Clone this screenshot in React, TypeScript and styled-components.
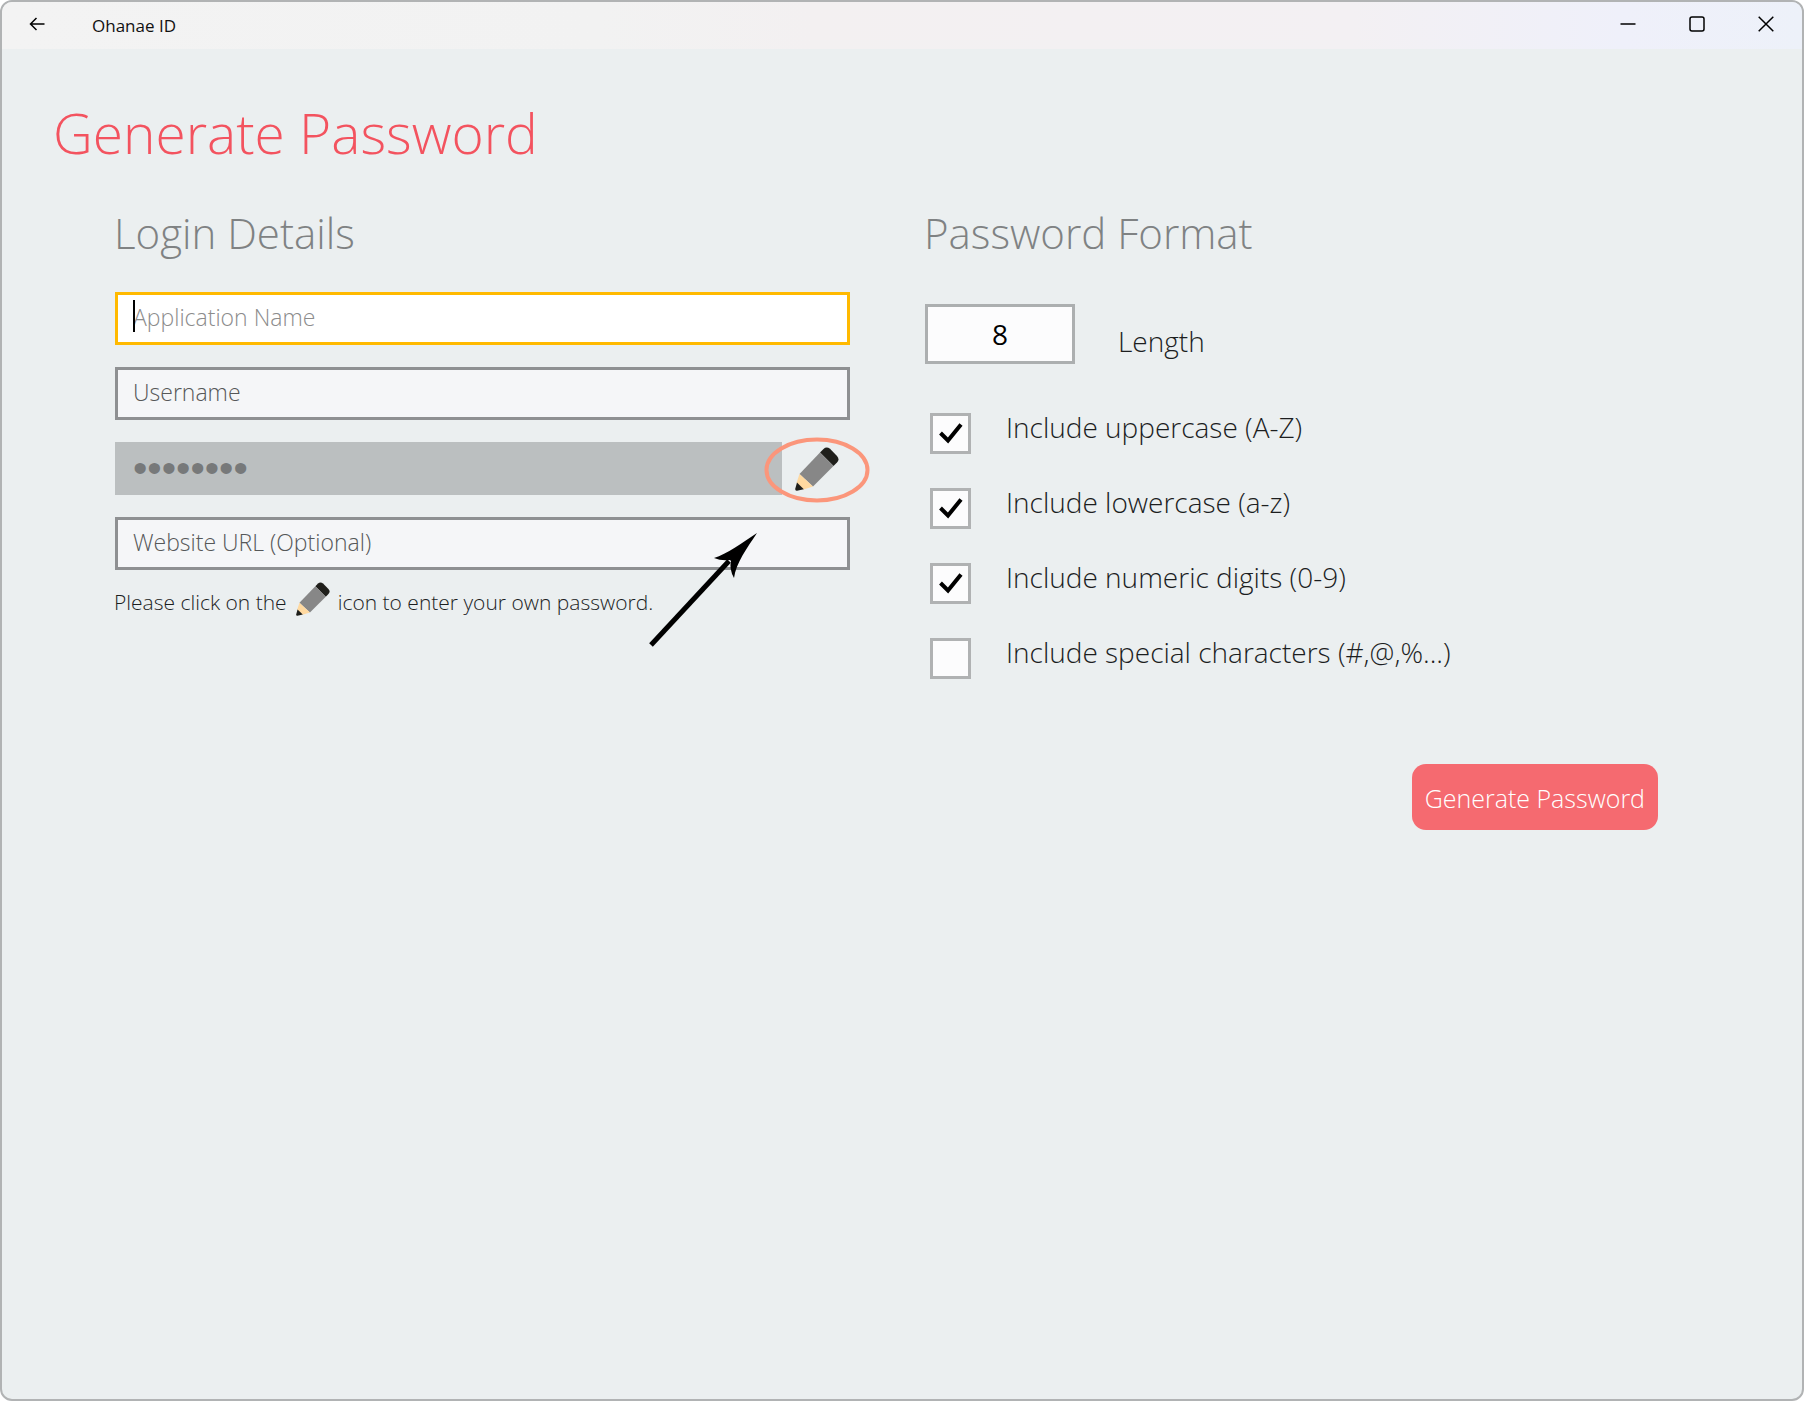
import React, { useState } from "react";
import styled, { createGlobalStyle } from "styled-components";

const GlobalStyle = createGlobalStyle`
  *, *::before, *::after { box-sizing: border-box; }
  html, body { margin: 0; background: #ffffff; }
  body, input, button {
    font-family: "Open Sans", "Noto Sans", sans-serif;
    font-weight: 300;
  }
`;

const Window = styled.div`
  display: flex;
  flex-direction: column;
  min-height: 100vh;
  border: 2px solid #b1b3b4;
  border-radius: 12px;
  overflow: hidden;
  background: #ebeff0;
`;

const TitleBar = styled.header`
  display: flex;
  align-items: center;
  height: 47px;
  padding-right: 2px;
  background: linear-gradient(90deg, #f3f3f3 0%, #f2f2f2 33%, #f3f0f1 45%, #f3f0f3 75%, #eff0fa 90%, #edf1f9 100%);
`;

const BarButton = styled.button`
  display: grid;
  place-items: center;
  width: 69px;
  height: 47px;
  padding: 0 0 3px;
  border: 0;
  background: transparent;
  color: #000000;
`;

const AppName = styled.span`
  flex: 1;
  padding-left: 21px;
  font-size: 17px;
  font-weight: 400;
  line-height: 24px;
  color: #111111;
`;

const Page = styled.main`
  padding: 44px 142px 60px 113px;
`;

const PageTitle = styled.h1`
  margin: 0 0 30px -62px;
  font-size: 55px;
  font-weight: 300;
  line-height: 80px;
  color: #f3535f;
`;

const Columns = styled.div`
  display: grid;
  grid-template-columns: 1fr 1fr;
  gap: 75px;
`;

const SectionTitle = styled.h2`
  margin: 0 0 29px -1px;
  font-size: 42px;
  font-weight: 300;
  line-height: 60px;
  color: #7f8283;
`;

const Fields = styled.div`
  display: flex;
  flex-direction: column;
  gap: 22px;
`;

const FieldRow = styled.div`
  position: relative;
  display: flex;
  align-items: center;
`;

const TextField = styled.input<{ $active?: boolean }>`
  flex: 1;
  min-width: 0;
  height: 53px;
  padding: 0 15px 3px;
  border: 3px solid ${(p) => (p.$active ? "#ffb900" : "#8e9092")};
  border-radius: 0;
  outline: none;
  background: ${(p) => (p.$active ? "#ffffff" : "#f5f6f8")};
  font-size: 23px;
  color: #000000;
  caret-color: ${(p) => (p.$active ? "transparent" : "auto")};
  &::placeholder {
    opacity: 1;
    color: ${(p) => (p.$active ? "#8c8c8c" : "#565859")};
  }
`;

const Caret = styled.span`
  position: absolute;
  left: 18px;
  top: 8px;
  width: 2px;
  height: 32px;
  background: #000000;
`;

const PasswordField = styled.input`
  flex: 1;
  min-width: 0;
  height: 53px;
  padding: 0 18px;
  border: 0;
  border-radius: 0;
  background: #bbbfc0;
  font-family: "Liberation Sans", Arial, sans-serif;
  font-size: 41px;
  color: #77797a;
`;

const EditButton = styled.button`
  display: grid;
  place-items: center;
  width: 68px;
  height: 53px;
  padding: 0 0 0 2px;
  border: 0;
  background: transparent;
`;

const Highlight = styled.svg`
  position: absolute;
  right: -20px;
  top: -5px;
  pointer-events: none;
`;

const Pointer = styled.svg`
  position: absolute;
  right: 93px;
  top: 16px;
  pointer-events: none;
`;

const Hint = styled.p`
  display: flex;
  align-items: center;
  margin: 12px 0 0 -1px;
  font-size: 21px;
  line-height: 36px;
  color: #1c1e1f;
`;

const HintIcon = styled.span`
  display: flex;
  padding: 0 8px 6px 9px;
`;

const LengthRow = styled.div`
  display: flex;
  align-items: center;
  gap: 43px;
  margin: 41px 0 43px;
`;

const LengthField = styled.input`
  width: 150px;
  height: 60px;
  padding: 0;
  border: 3px solid #acafb0;
  border-radius: 0;
  background: #fcfcfd;
  font-size: 28px;
  font-weight: 400;
  text-align: center;
  color: #000000;
`;

const OptionLabel = styled.label`
  font-size: 28px;
  line-height: 40px;
  color: #1c1e1f;
`;

const LengthLabel = styled(OptionLabel)`
  padding-top: 14px;
`;

const Options = styled.div`
  display: flex;
  flex-direction: column;
  gap: 28px;
`;

const OptionRow = styled.div`
  display: flex;
  align-items: flex-start;
  gap: 35px;
  padding-left: 5px;
`;

const CheckBox = styled.span`
  position: relative;
  width: 41px;
  height: 41px;
  margin-top: 6px;
`;

const CheckInput = styled.input`
  appearance: none;
  display: block;
  width: 41px;
  height: 41px;
  margin: 0;
  border: 3px solid #b0b2b3;
  background: #fcfcfd;
`;

const CheckMark = styled.svg`
  position: absolute;
  left: 9px;
  top: 10px;
  pointer-events: none;
`;

const Actions = styled.div`
  display: flex;
  justify-content: flex-end;
  margin-top: 85px;
  padding-right: 2px;
`;

const PrimaryButton = styled.button`
  height: 66px;
  padding: 2px 13px 0;
  border: 0;
  border-radius: 14px;
  background: #f56a70;
  font-size: 25px;
  white-space: nowrap;
  color: #ffffff;
`;

const Pencil = ({ size }: { size: number }) => (
  <svg width={size} height={size} viewBox="0 0 44 44" aria-hidden="true">
    <path d="M25 5.5 L28.5 2 Q31.5 -0.8 35 1.8 L42 9 Q45 12.500 42 15.500 L38.500 19 Z" fill="#1f1f1b" />
    <path d="M25 5.500 L38.500 19 L18 39.500 L4.500 27 Z" fill="#878787" />
    <path d="M4.500 27 L18 39.500 L8.500 42.500 L1.500 36 Z" fill="#ffd9a0" />
    <path d="M2 35.500 L8.800 42.200 L2 43.800 Q0 44 0.200 42 Z" fill="#1f1f1b" />
  </svg>
);

const initialOptions = [
  { id: "upper", label: "Include uppercase (A-Z)", checked: true },
  { id: "lower", label: "Include lowercase (a-z)", checked: true },
  { id: "digits", label: "Include numeric digits (0-9)", checked: true },
  { id: "special", label: "Include special characters (#,@,%...)", checked: false },
];

export default function App() {
  const [options, setOptions] = useState(initialOptions);
  const toggle = (id: string) =>
    setOptions(options.map((o) => (o.id === id ? { ...o, checked: !o.checked } : o)));

  return (
    <>
      <GlobalStyle />
      <Window>
        <TitleBar>
          <BarButton aria-label="Back">
            <svg width="16" height="14" viewBox="0 0 16 14" fill="none" stroke="currentColor" strokeWidth="1.5">
              <path d="M15.500 7 H1.500 M7.500 1 L1.500 7 L7.500 13" />
            </svg>
          </BarButton>
          <AppName>Ohanae ID</AppName>
          <BarButton aria-label="Minimize">
            <svg width="16" height="16" viewBox="0 0 16 16" stroke="currentColor" strokeWidth="1.5">
              <path d="M0.500 8 H15.500" />
            </svg>
          </BarButton>
          <BarButton aria-label="Maximize">
            <svg width="16" height="16" viewBox="0 0 16 16" fill="none" stroke="currentColor" strokeWidth="1.5">
              <rect x="1" y="1" width="14" height="14" rx="2" />
            </svg>
          </BarButton>
          <BarButton aria-label="Close">
            <svg width="16" height="16" viewBox="0 0 16 16" stroke="currentColor" strokeWidth="1.5">
              <path d="M0.700 0.700 L15.300 15.300 M15.300 0.700 L0.700 15.300" />
            </svg>
          </BarButton>
        </TitleBar>

        <Page>
          <PageTitle>Generate Password</PageTitle>
          <Columns>
            <section>
              <SectionTitle>Login Details</SectionTitle>
              <Fields>
                <FieldRow>
                  <TextField $active aria-label="Application Name" placeholder="Application Name" />
                  <Caret />
                </FieldRow>
                <FieldRow>
                  <TextField aria-label="Username" placeholder="Username" />
                </FieldRow>
                <FieldRow>
                  <PasswordField type="password" aria-label="Password" defaultValue="password" disabled />
                  <EditButton aria-label="Edit password">
                    <Pencil size={44} />
                  </EditButton>
                  <Highlight width="106" height="66" viewBox="0 0 106 66" fill="none" aria-hidden="true">
                    <ellipse cx="53" cy="33" rx="50.500" ry="30.500" stroke="#fb967b" strokeWidth="4" />
                  </Highlight>
                </FieldRow>
                <FieldRow>
                  <TextField aria-label="Website URL" placeholder="Website URL (Optional)" />
                  <Pointer width="108" height="114" viewBox="0 0 108 114" aria-hidden="true">
                    <path d="M2 112 L80 28" stroke="#000000" strokeWidth="5" />
                    <path d="M108 0 C93 10 78 21 65 25 Q72 28 81 27 L82 28 Q80 36 85 45 C87 30 98 15 108 0 Z" fill="#000000" />
                  </Pointer>
                </FieldRow>
              </Fields>
              <Hint>
                <span>Please click on the</span>
                <HintIcon>
                  <Pencil size={34} />
                </HintIcon>
                <span>icon to enter your own password.</span>
              </Hint>
            </section>

            <section>
              <SectionTitle>Password Format</SectionTitle>
              <LengthRow>
                <LengthField id="length" defaultValue="8" inputMode="numeric" />
                <LengthLabel htmlFor="length">Length</LengthLabel>
              </LengthRow>
              <Options>
                {options.map((o) => (
                  <OptionRow key={o.id}>
                    <CheckBox>
                      <CheckInput type="checkbox" id={o.id} checked={o.checked} onChange={() => toggle(o.id)} />
                      {o.checked && (
                        <CheckMark width="24" height="21" viewBox="0 0 24 21" fill="none" aria-hidden="true">
                          <path d="M1.500 10 L9 17.500 L22 1.500" stroke="#000000" strokeWidth="4" />
                        </CheckMark>
                      )}
                    </CheckBox>
                    <OptionLabel htmlFor={o.id}>{o.label}</OptionLabel>
                  </OptionRow>
                ))}
              </Options>
              <Actions>
                <PrimaryButton>Generate Password</PrimaryButton>
              </Actions>
            </section>
          </Columns>
        </Page>
      </Window>
    </>
  );
}
